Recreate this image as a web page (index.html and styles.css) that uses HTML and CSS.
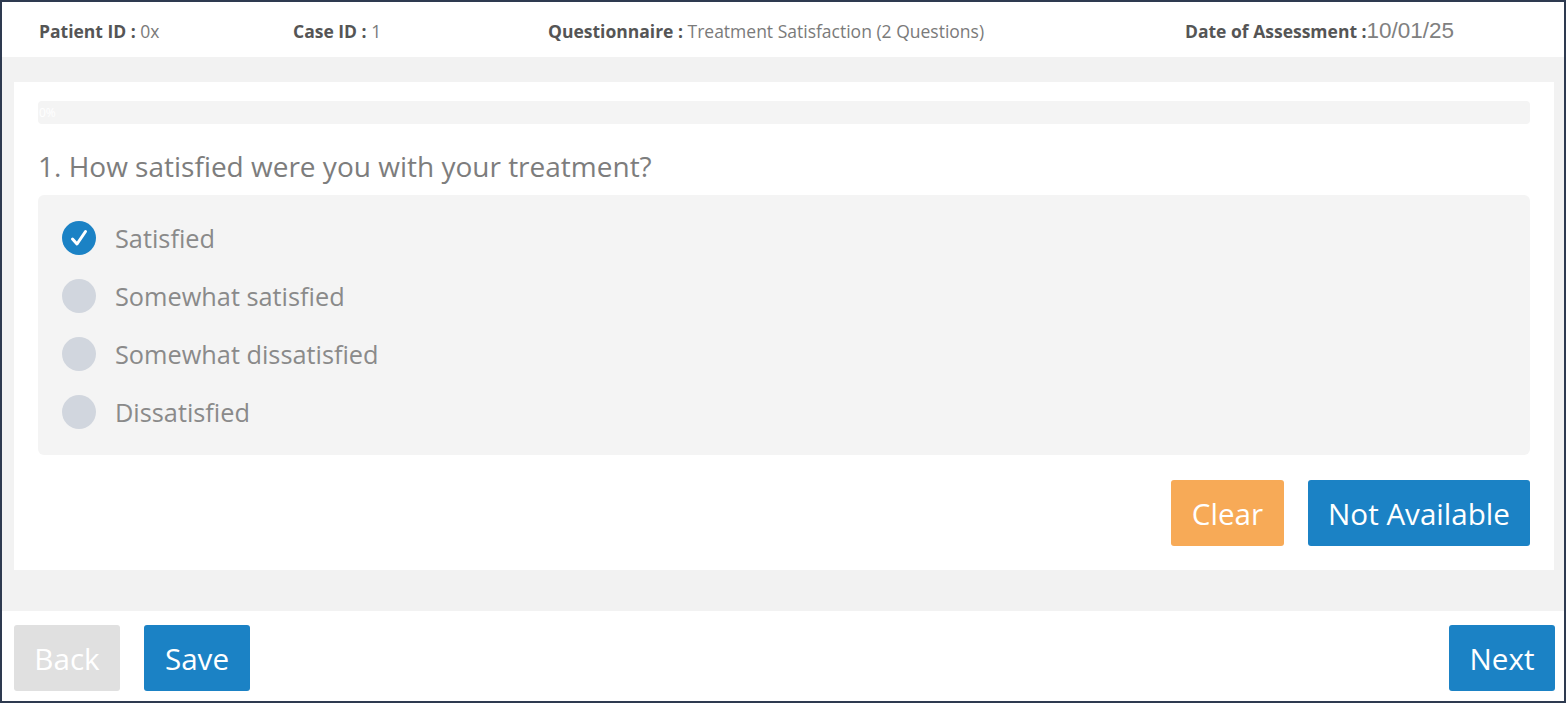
FILE: index.html
```html
<!DOCTYPE html>
<html lang="en">
<head>
<meta charset="utf-8">
<title>Treatment Satisfaction</title>
<link rel="stylesheet" href="styles.css">
</head>
<body>
<div class="frame">
  <header class="info">
    <div class="info-item"><b>Patient ID :</b> 0x</div>
    <div class="info-item"><b>Case ID :</b> 1</div>
    <div class="info-item"><b>Questionnaire :</b> Treatment Satisfaction (2 Questions)</div>
    <div class="info-item"><b>Date of Assessment :</b><span class="date">10/01/25</span></div>
  </header>
  <main class="stage">
    <section class="card">
      <div class="progress"><span class="progress-label">0%</span></div>
      <h1 class="question">1. How satisfied were you with your treatment?</h1>
      <div class="options">
        <div class="option">
          <span class="radio checked">
            <svg width="34" height="34" viewBox="0 0 34 34"><polyline points="10.5,18 15,23 23.5,10.5" fill="none" stroke="#fff" stroke-width="3" stroke-linecap="round" stroke-linejoin="round"/></svg>
          </span>
          <span class="label">Satisfied</span>
        </div>
        <div class="option"><span class="radio"></span><span class="label">Somewhat satisfied</span></div>
        <div class="option"><span class="radio"></span><span class="label">Somewhat dissatisfied</span></div>
        <div class="option"><span class="radio"></span><span class="label">Dissatisfied</span></div>
      </div>
      <div class="actions">
        <button class="btn btn-clear">Clear</button>
        <button class="btn btn-blue btn-na">Not Available</button>
      </div>
    </section>
  </main>
  <footer class="nav">
    <div class="nav-left">
      <button class="btn btn-disabled btn-nav">Back</button>
      <button class="btn btn-blue btn-nav">Save</button>
    </div>
    <button class="btn btn-blue btn-nav">Next</button>
  </footer>
</div>
</body>
</html>
```

FILE: styles.css
```css
* { box-sizing: border-box; }
html, body { margin: 0; padding: 0; }
body {
  font-family: "Open Sans", "Liberation Sans", sans-serif;
  background: #fff;
}
.frame {
  width: 1566px;
  height: 703px;
  border: 2px solid #2e3a50;
  display: flex;
  flex-direction: column;
  background: #fff;
}
.info {
  height: 55px;
  flex: none;
  display: grid;
  grid-template-columns: 254px 255px 637px 1fr;
  align-items: center;
  padding: 2px 0 0 37px;
  font-size: 17.5px;
  color: #7a7a7a;
  background: #fff;
}
.info-item b { color: #555; font-weight: 700; }
.date {
  font-family: "Liberation Sans", Arial, sans-serif;
  font-size: 22.5px;
  color: #808080;
}
.stage {
  height: 554px;
  flex: none;
  background: #f2f2f2;
  padding: 25px 10px 0 12px;
}
.card {
  background: #fff;
  height: 488px;
  padding: 19px 24px 24px 24px;
  display: flex;
  flex-direction: column;
}
.progress {
  height: 23px;
  background: #f4f4f4;
  border-radius: 4px;
  display: flex;
  align-items: center;
}
.progress-label {
  color: #fff;
  font-size: 12px;
  padding-left: 1px;
}
.question {
  margin: 23px 0 10px 0;
  font-size: 28px;
  line-height: 38px;
  font-weight: 400;
  color: #7d7d7d;
}
.options {
  background: #f4f4f4;
  border-radius: 6px;
  padding: 14px 24px;
  height: 260px;
}
.option {
  height: 58px;
  display: flex;
  align-items: center;
  gap: 19px;
}
.radio {
  width: 34px;
  height: 34px;
  border-radius: 50%;
  background: #d1d6de;
  flex: none;
  display: block;
}
.radio.checked { background: #1b82c5; }
.radio svg { display: block; }
.label {
  font-size: 25.3px;
  color: #8a8a8a;
}
.actions {
  margin-top: 25px;
  display: flex;
  justify-content: flex-end;
  gap: 24px;
}
.btn {
  height: 66px;
  border: none;
  border-radius: 3px;
  font-family: "Open Sans", "Liberation Sans", sans-serif;
  font-size: 29.6px;
  color: #fff;
  padding: 0;
  cursor: pointer;
}
.btn-clear { background: #f7aa57; width: 113px; }
.btn-blue { background: #1b82c5; }
.btn-na { width: 222px; }
.btn-disabled { background: #e0e0e0; }
.nav {
  flex: 1;
  display: flex;
  justify-content: space-between;
  align-items: flex-start;
  padding: 14px 9px 0 12px;
  background: #fff;
}
.nav-left { display: flex; gap: 24px; }
.btn-nav { width: 106px; }
```
